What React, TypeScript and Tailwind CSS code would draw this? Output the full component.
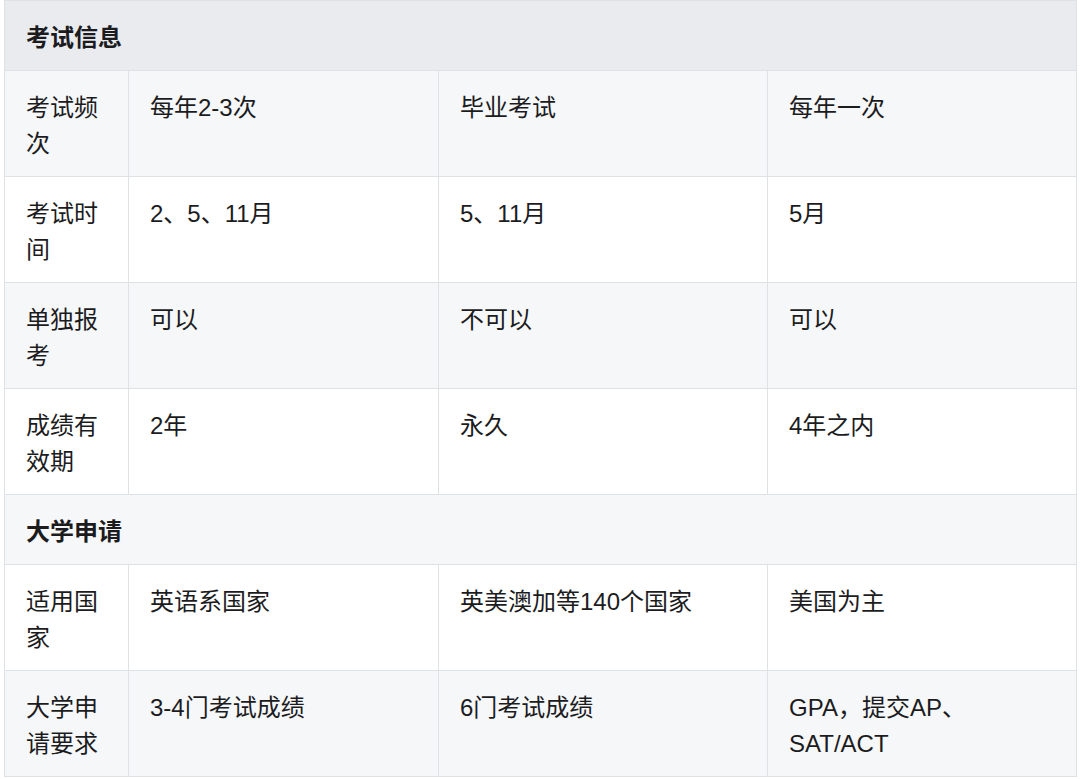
type Row = { label: string; cells: string[] } | { section: string };

const rows: Row[] = [
  { label: "考试频次", cells: ["每年2-3次", "毕业考试", "每年一次"] },
  { label: "考试时间", cells: ["2、5、11月", "5、11月", "5月"] },
  { label: "单独报考", cells: ["可以", "不可以", "可以"] },
  { label: "成绩有效期", cells: ["2年", "永久", "4年之内"] },
  { section: "大学申请" },
  { label: "适用国家", cells: ["英语系国家", "英美澳加等140个国家", "美国为主"] },
  { label: "大学申请要求", cells: ["3-4门考试成绩", "6门考试成绩", "GPA，提交AP、SAT/ACT"] },
];

const cell = "border border-[#dfe2e5] px-[21px] pt-[19px] pb-[14px] align-top";

export default function App() {
  return (
    <div
      className="bg-white pl-[4px] text-[#1c1c1e]"
      style={{ fontFamily: '"Liberation Sans", "Noto Sans CJK SC", sans-serif' }}
    >
      <table className="w-[1072px] table-fixed border-collapse text-[24px] leading-[36px]">
        <colgroup>
          <col className="w-[124px]" />
          <col className="w-[310px]" />
          <col className="w-[329px]" />
          <col className="w-[309px]" />
        </colgroup>
        <thead>
          <tr className="bg-[#e9ebee]">
            <th colSpan={4} className={`${cell} text-left font-bold`}>
              考试信息
            </th>
          </tr>
        </thead>
        <tbody>
          {rows.map((r, i) => {
            const bg = i % 2 === 0 ? "bg-[#f6f7f9]" : "bg-white";
            if ("section" in r) {
              return (
                <tr key={i} className={bg}>
                  <td colSpan={4} className={`${cell} font-bold`}>
                    {r.section}
                  </td>
                </tr>
              );
            }
            return (
              <tr key={i} className={bg}>
                <td className={cell}>{r.label}</td>
                {r.cells.map((c, j) => (
                  <td key={j} className={cell}>
                    {c}
                  </td>
                ))}
              </tr>
            );
          })}
        </tbody>
      </table>
    </div>
  );
}
